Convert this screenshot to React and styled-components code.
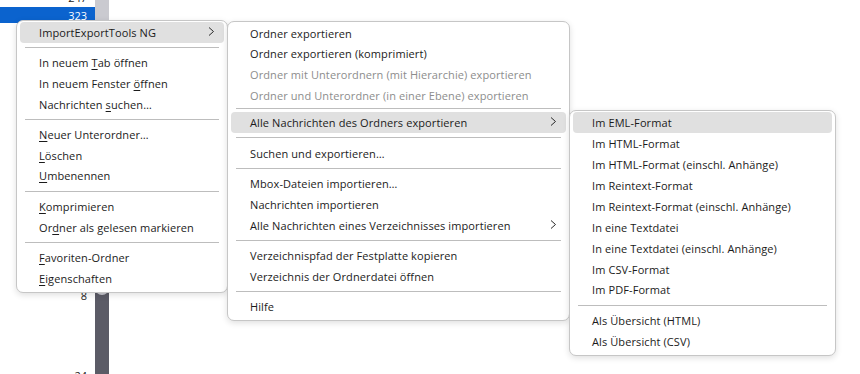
import React from 'react';
import styled, { createGlobalStyle } from 'styled-components';

const Global = createGlobalStyle`
  html, body { margin: 0; padding: 0; background: #fff; }
  body {
    width: 860px; height: 374px; overflow: hidden;
    font-family: "Open Sans", "Noto Sans", sans-serif;
    -webkit-font-smoothing: antialiased;
  }
`;

const Screen = styled.div`
  position: relative;
  width: 860px;
  height: 374px;
  overflow: hidden;
  background: #fff;
  display: flex;
  align-items: stretch;
`;

const FolderPane = styled.div`
  width: 95px;
  flex: none;
  display: flex;
  flex-direction: column;
  gap: 2px;
  background: #fff;
`;

const CountRow = styled.div`
  height: 16px;
  flex: none;
  display: flex;
  align-items: center;
  justify-content: flex-end;
  padding-right: 8px;
  font-size: 11px;
  color: ${p => (p.$selected ? '#fff' : '#1b1b1b')};
  background: ${p => (p.$selected ? '#0b63ce' : 'transparent')};
  &:first-child { margin-top: -11px; }
`;

const Spacer = styled.div`
  flex: none;
  height: ${p => p.$h}px;
`;

const ScrollTrack = styled.div`
  width: 14px;
  flex: none;
  background: #5b5b66;
  display: flex;
  flex-direction: column;
`;

const ScrollThumb = styled.div`
  height: 295px;
  background: #cacad0;
  border-radius: 0 0 7px 7px;
`;

const Popup = styled.div`
  --row-h: ${p => p.$rowH}px;
  position: absolute;
  left: ${p => p.$left}px;
  top: ${p => p.$top}px;
  width: ${p => p.$width}px;
  box-sizing: border-box;
  background: #fff;
  border: 1px solid #c6c6c6;
  border-radius: 7px;
  box-shadow: 0 2px 6px rgba(0, 0, 0, 0.13);
  padding: 1px 3px 3px;
  display: flex;
  flex-direction: column;
  font-family: "Open Sans", "Noto Sans", sans-serif;
  font-size: 11px;
  letter-spacing: 0.1px;
`;

const Item = styled.div`
  height: var(--row-h);
  flex: none;
  display: flex;
  align-items: center;
  padding: 0 9px 0 19px;
  border-radius: 4px;
  white-space: nowrap;
  color: ${p => (p.$disabled ? '#8d8d8d' : '#1b1b1b')};
  background: ${p => (p.$active ? '#e0e0e0' : 'transparent')};
`;

const Label = styled.span`
  flex: 1;
`;

const Key = styled.u`
  text-decoration: underline;
  text-underline-offset: 2px;
  text-decoration-thickness: 1px;
`;

const Sep = styled.div`
  height: 1px;
  flex: none;
  margin: ${p => (p.$compact ? '2.5px 5px 3.5px' : '4.5px 5px')};
  background: #bdbdbd;
`;

const ChevronSvg = styled.svg`
  flex: none;
  display: block;
  margin-top: -2px;
`;

const Chevron = () => (
  <ChevronSvg width="7" height="9" viewBox="0 0 7 9">
    <polyline points="1,0.5 5.5,4.5 1,8.5" fill="none" stroke="#2a2a2a" strokeWidth="1" />
  </ChevronSvg>
);

const renderLabel = text => {
  const i = text.indexOf('&');
  if (i < 0) return text;
  return (
    <>
      {text.slice(0, i)}
      <Key>{text[i + 1]}</Key>
      {text.slice(i + 2)}
    </>
  );
};

const menu1 = [
  { t: 'ImportExportTools NG', sub: true, active: true },
  '-',
  { t: 'In neuem &Tab öffnen' },
  { t: 'In neuem Fenster &öffnen' },
  { t: 'Nachrichten &suchen…' },
  '-',
  { t: '&Neuer Unterordner…' },
  { t: '&Löschen' },
  { t: '&Umbenennen' },
  '-',
  { t: '&Komprimieren' },
  { t: 'Or&dner als gelesen markieren' },
  '-',
  { t: '&Favoriten-Ordner' },
  { t: '&Eigenschaften' },
];

const menu2 = [
  { t: 'Ordner exportieren' },
  { t: 'Ordner exportieren (komprimiert)' },
  { t: 'Ordner mit Unterordnern (mit Hierarchie) exportieren', disabled: true },
  { t: 'Ordner und Unterordner (in einer Ebene) exportieren', disabled: true },
  '~',
  { t: 'Alle Nachrichten des Ordners exportieren', sub: true, active: true },
  '-',
  { t: 'Suchen und exportieren…' },
  '-',
  { t: 'Mbox-Dateien importieren…' },
  { t: 'Nachrichten importieren' },
  { t: 'Alle Nachrichten eines Verzeichnisses importieren', sub: true },
  '-',
  { t: 'Verzeichnispfad der Festplatte kopieren' },
  { t: 'Verzeichnis der Ordnerdatei öffnen' },
  '-',
  { t: 'Hilfe' },
];

const menu3 = [
  { t: 'Im EML-Format', active: true },
  { t: 'Im HTML-Format' },
  { t: 'Im HTML-Format (einschl. Anhänge)' },
  { t: 'Im Reintext-Format' },
  { t: 'Im Reintext-Format (einschl. Anhänge)' },
  { t: 'In eine Textdatei' },
  { t: 'In eine Textdatei (einschl. Anhänge)' },
  { t: 'Im CSV-Format' },
  { t: 'Im PDF-Format' },
  '-',
  { t: 'Als Übersicht (HTML)' },
  { t: 'Als Übersicht (CSV)' },
];

const Menu = ({ items, left, top, width, rowH }) => (
  <Popup $left={left} $top={top} $width={width} $rowH={rowH}>
    {items.map((it, i) =>
      typeof it === 'string' ? (
        <Sep key={i} $compact={it === '~'} />
      ) : (
        <Item key={i} $active={it.active} $disabled={it.disabled}>
          <Label>{renderLabel(it.t)}</Label>
          {it.sub && <Chevron />}
        </Item>
      )
    )}
  </Popup>
);

export default function App() {
  return (
    <>
      <Global />
      <Screen>
        <FolderPane>
          <CountRow>247</CountRow>
          <CountRow $selected>323</CountRow>
          <Spacer $h={260} />
          <CountRow>8</CountRow>
          <Spacer $h={60} />
          <CountRow>24</CountRow>
        </FolderPane>
        <ScrollTrack>
          <ScrollThumb />
        </ScrollTrack>
        <Menu items={menu1} left={16} top={20} width={212} rowH={20.6} />
        <Menu items={menu2} left={227} top={21} width={343} rowH={20.6} />
        <Menu items={menu3} left={569} top={110} width={267} rowH={20.95} />
      </Screen>
    </>
  );
}
